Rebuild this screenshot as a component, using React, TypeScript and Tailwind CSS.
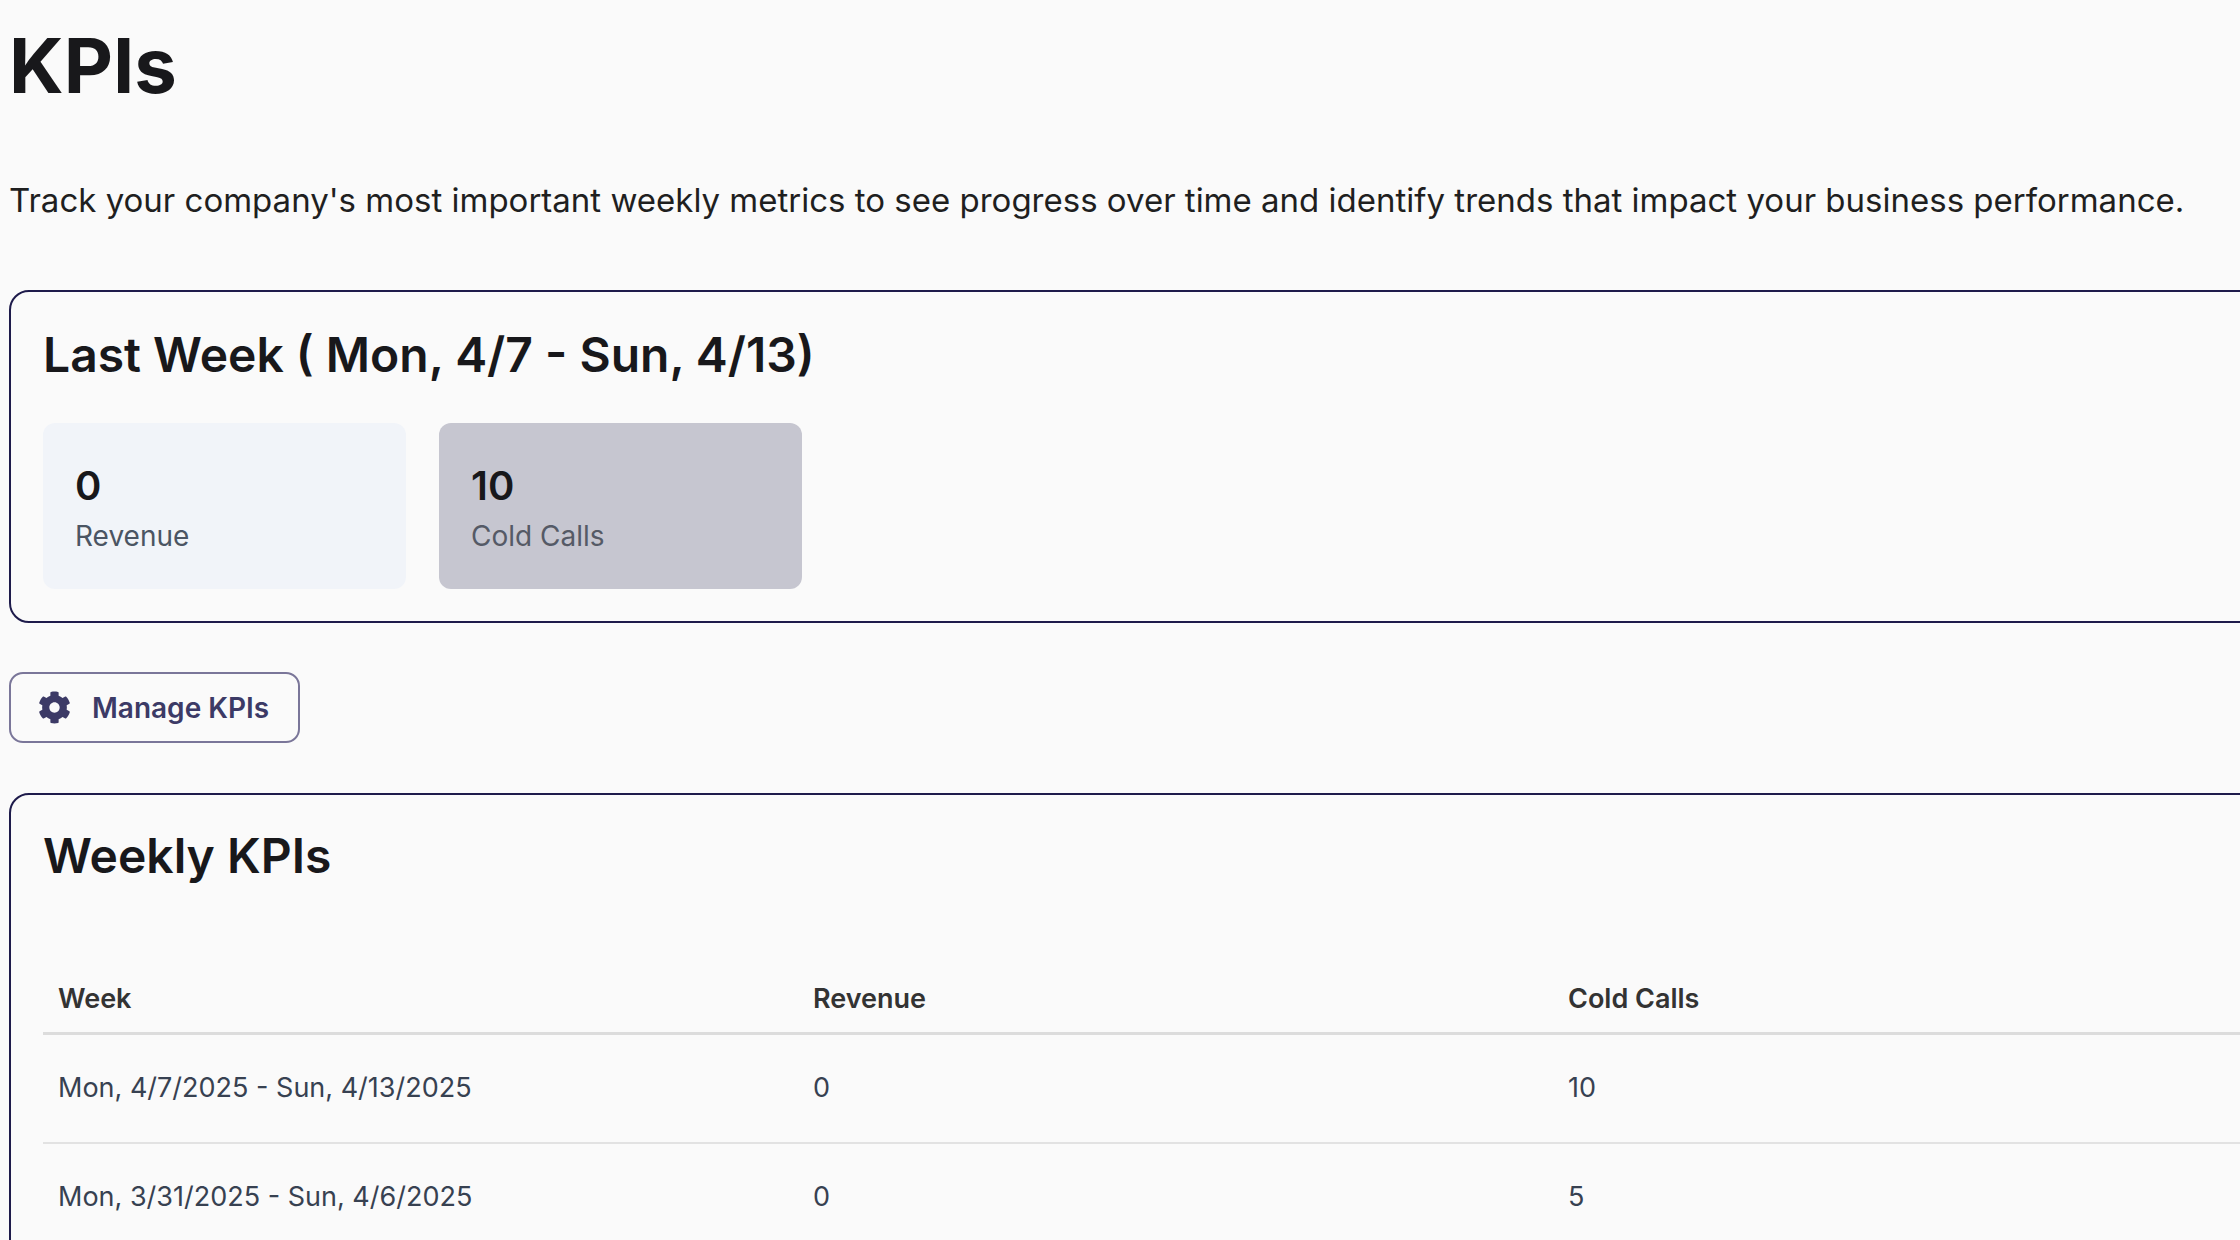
import { FaCog } from "react-icons/fa";

const rows = [
  { week: "Mon, 4/7/2025 - Sun, 4/13/2025", revenue: "0", calls: "10" },
  { week: "Mon, 3/31/2025 - Sun, 4/6/2025", revenue: "0", calls: "5" },
];

export default function App() {
  return (
    <div className="w-[2240px] h-[1240px] overflow-hidden bg-[#fafafa] font-[Inter,sans-serif] text-[#18181b]">
      <div className="w-[2360px] pl-[9px] pt-[27px]">
        <h1 className="text-[76px] leading-none font-bold">KPIs</h1>
        <p className="mt-[73px] text-[33px] leading-[1.5] text-[#1f1f1f]">
          Track your company's most important weekly metrics to see progress over time and identify trends that impact your business performance.
        </p>

        <section className="mt-[64px] border-2 border-[#1e1b4b] rounded-[20px] px-[32px] pt-[34px] pb-[32px]">
          <h2 className="text-[48px] leading-[1.2] font-semibold">Last Week ( Mon, 4/7 - Sun, 4/13)</h2>
          <div className="mt-[40px] flex gap-[33px]">
            <div className="w-[363px] h-[166px] rounded-[12px] bg-[#f1f4f9] pl-[32px] pt-[39px]">
              <div className="text-[40px] leading-[1.2] font-semibold">0</div>
              <div className="mt-[5px] text-[28px] leading-[1.5] text-[#4b5563]">Revenue</div>
            </div>
            <div className="w-[363px] h-[166px] rounded-[12px] bg-[#c6c6d0] pl-[32px] pt-[39px]">
              <div className="text-[40px] leading-[1.2] font-semibold">10</div>
              <div className="mt-[5px] text-[28px] leading-[1.5] text-[#555a66]">Cold Calls</div>
            </div>
          </div>
        </section>

        <button className="mt-[49px] w-[291px] h-[71px] flex items-center gap-[21px] pl-[27px] border-2 border-[#7a7699] rounded-[14px] text-[#3c3a66] text-[28px] font-semibold">
          <FaCog className="w-[33px] h-[33px]" />
          Manage KPIs
        </button>

        <section className="mt-[50px] border-2 border-[#1e1b4b] rounded-[20px] px-[32px] pt-[32px] pb-[40px]">
          <h2 className="text-[48px] leading-[1.2] font-semibold">Weekly KPIs</h2>
          <table className="mt-[81px] w-[2265px] text-left text-[27px] leading-[1.5]">
            <thead>
              <tr className="border-b-[3px] border-[#dcdcdc]">
                <th className="w-[755px] px-[15px] pt-[13px] pb-[13px] font-semibold text-[#333]">Week</th>
                <th className="w-[755px] px-[15px] pt-[13px] pb-[13px] font-semibold text-[#333]">Revenue</th>
                <th className="w-[755px] px-[15px] pt-[13px] pb-[13px] font-semibold text-[#333]">Cold Calls</th>
              </tr>
            </thead>
            <tbody>
              {rows.map((r) => (
                <tr key={r.week} className="border-b-2 border-[#e2e2e2] text-[#374151]">
                  <td className="px-[15px] py-[33px]">{r.week}</td>
                  <td className="px-[15px] py-[33px]">{r.revenue}</td>
                  <td className="px-[15px] py-[33px]">{r.calls}</td>
                </tr>
              ))}
            </tbody>
          </table>
        </section>
      </div>
    </div>
  );
}
